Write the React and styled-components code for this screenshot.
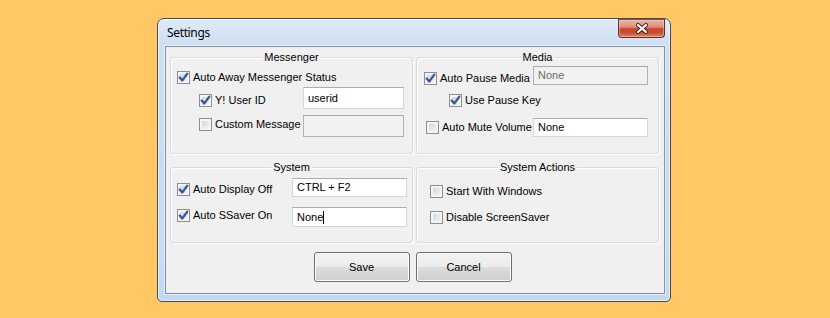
import React from 'react';
import styled, { createGlobalStyle } from 'styled-components';

const Global = createGlobalStyle`
  html, body { margin: 0; padding: 0; }
  body {
    background: #ffc864;
    font-family: "Liberation Sans", Arial, sans-serif;
    font-size: 11px;
    color: #000;
  }
`;

const Stage = styled.div`
  width: 830px;
  height: 318px;
  box-sizing: border-box;
  padding: 18px 0 0 157px;
  display: flex;
  align-items: flex-start;
`;

const Window = styled.div`
  width: 514px;
  height: 284px;
  box-sizing: border-box;
  border: 1px solid #3d4d60;
  border-radius: 7px 7px 5px 5px;
  background: linear-gradient(180deg, #dfeaf7 0px, #cddff2 27px, #c4d9f0 100%);
  box-shadow: inset 0 0 0 1px rgba(255, 255, 255, 0.6);
  display: flex;
  flex-direction: column;
  padding: 0 5px 7px 7px;
`;

const TitleBar = styled.div`
  height: 27px;
  display: flex;
  align-items: flex-start;
  justify-content: space-between;
`;

const Title = styled.div`
  font-family: "Noto Sans", "Open Sans", sans-serif;
  font-size: 12px;
  letter-spacing: -0.35px;
  line-height: 16px;
  margin: 6px 0 0 2px;
  color: #000;
`;

const CloseBtn = styled.div`
  width: 47px;
  height: 19px;
  box-sizing: border-box;
  border: 1px solid #6a2c22;
  border-top-color: #8a4a40;
  border-radius: 0 0 4px 4px;
  background: linear-gradient(
    180deg,
    #eab0a2 0%,
    #df9180 40%,
    #c9462d 52%,
    #c84d33 75%,
    #dc8468 100%
  );
  box-shadow: inset 0 0 0 1px rgba(255, 220, 210, 0.45);
  display: flex;
  align-items: center;
  justify-content: center;
`;

const Client = styled.div`
  height: 248px;
  box-sizing: border-box;
  background: #f0f0f0;
  border: 1px solid #7e92a8;
  box-shadow: 0 0 0 1px rgba(255, 255, 255, 0.55);
  padding: 10px 5px 11px 4px;
  display: flex;
  flex-direction: column;
`;

const Groups = styled.div`
  display: grid;
  grid-template-columns: 243px 243px;
  grid-template-rows: 97px 76px;
  column-gap: 3px;
  row-gap: 13px;
`;

const Group = styled.div`
  box-sizing: border-box;
  border: 1px solid #d5dbe0;
  border-radius: 3px;
  box-shadow: inset 1px 1px 0 #fff, 1px 1px 0 #fff;
  display: flex;
  flex-direction: column;
`;

const GroupTitle = styled.div`
  align-self: center;
  margin-top: -7px;
  padding: 0 2px;
  line-height: 13px;
  background: #f0f0f0;
  color: #000;
`;

const Row = styled.div`
  display: flex;
  align-items: flex-start;
  height: ${p => p.$h}px;
  margin-top: ${p => p.$mt}px;
  padding-left: ${p => p.$pl}px;
`;

const Option = styled.label`
  display: flex;
  align-items: center;
  gap: 3px;
  height: 13px;
  line-height: 13px;
  white-space: nowrap;
  margin-top: ${p => p.$mt || 0}px;
  width: ${p => (p.$w ? `${p.$w}px` : 'auto')};
  flex: none;
`;

const Box = styled.span`
  width: 13px;
  height: 13px;
  box-sizing: border-box;
  border: 1px solid #8e8f8f;
  background: linear-gradient(135deg, #c9ccd1 0%, #e6e7e9 55%, #f8f8f8 100%);
  box-shadow: inset 0 0 0 2px #f4f4f4;
  display: flex;
  flex: none;
`;

const TextBox = styled.div`
  width: ${p => p.$w}px;
  height: ${p => p.$h}px;
  box-sizing: border-box;
  border: 1px solid ${p => (p.$disabled ? '#b2b2b2' : '#d3d6db')};
  border-top-color: ${p => (p.$disabled ? '#a9a9a9' : '#abadb3')};
  background: ${p => (p.$disabled ? '#f1f1f1' : '#fff')};
  color: ${p => (p.$disabled ? '#6d6d6d' : '#000')};
  padding-left: 4px;
  display: flex;
  align-items: center;
  line-height: 13px;
  flex: none;
`;

const Caret = styled.span`
  display: inline-block;
  width: 1px;
  height: 13px;
  background: #000;
`;

const ButtonRow = styled.div`
  display: flex;
  justify-content: center;
  gap: 6px;
  margin-top: 9px;
  padding-right: 4px;
`;

const Button = styled.div`
  width: 96px;
  height: 30px;
  box-sizing: border-box;
  border: 1px solid #707070;
  border-radius: 3px;
  background: linear-gradient(180deg, #f3f3f3 0%, #ececec 48%, #dcdcdc 52%, #d0d0d0 100%);
  box-shadow: inset 0 0 0 1px #fbfbfb;
  display: flex;
  align-items: center;
  justify-content: center;
  color: #000;
`;

const Check = ({ checked }) => (
  <Box>
    {checked && (
      <svg width="11" height="11" viewBox="0 0 11 11">
        <path
          d="M1.8 5.6 L4.3 8.4 L9.2 1.8"
          fill="none"
          stroke="#9fb1d6"
          strokeWidth="3"
          strokeLinecap="round"
          strokeLinejoin="round"
        />
        <path
          d="M1.8 5.6 L4.3 8.4 L9.2 1.8"
          fill="none"
          stroke="#2f4c8c"
          strokeWidth="1.7"
          strokeLinecap="round"
          strokeLinejoin="round"
        />
      </svg>
    )}
  </Box>
);

const Opt = ({ checked, label, w, mt }) => (
  <Option $w={w} $mt={mt}>
    <Check checked={checked} />
    <span>{label}</span>
  </Option>
);

const CloseGlyph = () => (
  <svg width="14" height="11" viewBox="0 0 14 11">
    <path d="M3 2 L11 9 M11 2 L3 9" stroke="#4a1d16" strokeWidth="4" strokeLinecap="round" />
    <path d="M3 2 L11 9 M11 2 L3 9" stroke="#ffffff" strokeWidth="2.2" strokeLinecap="round" />
  </svg>
);

export default function App() {
  return (
    <>
      <Global />
      <Stage>
        <Window>
          <TitleBar>
            <Title>Settings</Title>
            <CloseBtn>
              <CloseGlyph />
            </CloseBtn>
          </TitleBar>
          <Client>
            <Groups>
              <Group>
                <GroupTitle>Messenger</GroupTitle>
                <Row $h={13} $mt={7} $pl={6}>
                  <Opt checked label="Auto Away Messenger Status" />
                </Row>
                <Row $h={22} $mt={3} $pl={28}>
                  <Opt checked label="Y! User ID" w={104} mt={7} />
                  <TextBox $w={101} $h={22}>userid</TextBox>
                </Row>
                <Row $h={22} $mt={6} $pl={28}>
                  <Opt label="Custom Message" w={104} mt={3} />
                  <TextBox $w={101} $h={22} $disabled />
                </Row>
              </Group>
              <Group>
                <GroupTitle>Media</GroupTitle>
                <Row $h={19} $mt={2} $pl={7}>
                  <Opt checked label="Auto Pause Media" w={109} mt={6} />
                  <TextBox $w={115} $h={19} $disabled>None</TextBox>
                </Row>
                <Row $h={13} $mt={9} $pl={32}>
                  <Opt checked label="Use Pause Key" />
                </Row>
                <Row $h={19} $mt={11} $pl={9}>
                  <Opt label="Auto Mute Volume" w={107} mt={3} />
                  <TextBox $w={115} $h={19}>None</TextBox>
                </Row>
              </Group>
              <Group>
                <GroupTitle>System</GroupTitle>
                <Row $h={19} $mt={4} $pl={6}>
                  <Opt checked label="Auto Display Off" w={115} mt={5} />
                  <TextBox $w={115} $h={19}>CTRL + F2</TextBox>
                </Row>
                <Row $h={20} $mt={10} $pl={6}>
                  <Opt checked label="Auto SSaver On" w={115} mt={2} />
                  <TextBox $w={115} $h={20}>
                    None
                    <Caret />
                  </TextBox>
                </Row>
              </Group>
              <Group>
                <GroupTitle>System Actions</GroupTitle>
                <Row $h={13} $mt={11} $pl={13}>
                  <Opt label="Start With Windows" />
                </Row>
                <Row $h={13} $mt={13} $pl={13}>
                  <Opt label="Disable ScreenSaver" />
                </Row>
              </Group>
            </Groups>
            <ButtonRow>
              <Button>Save</Button>
              <Button>Cancel</Button>
            </ButtonRow>
          </Client>
        </Window>
      </Stage>
    </>
  );
}
